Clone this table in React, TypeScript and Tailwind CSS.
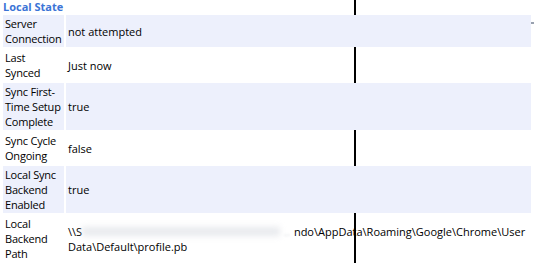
const rows: { label: string[]; value: React.ReactNode; shaded: boolean }[] = [
  { label: ["Server", "Connection"], value: "not attempted", shaded: true },
  { label: ["Last", "Synced"], value: "Just now", shaded: false },
  { label: ["Sync First-", "Time Setup", "Complete"], value: "true", shaded: true },
  { label: ["Sync Cycle", "Ongoing"], value: "false", shaded: false },
  { label: ["Local Sync", "Backend", "Enabled"], value: "true", shaded: true },
  {
    label: ["Local", "Backend", "Path"],
    value: (
      <>
        <span className="flex items-center whitespace-nowrap">
          \\S
          <span className="inline-block w-[198px] h-[9px] bg-gray-300 blur-[3px] opacity-50" />
          <span className="text-gray-300 blur-[1px] px-[4px]">..</span>
          ndo\AppData\Roaming\Google\Chrome\User
        </span>
        <span className="block">Data\Default\profile.pb</span>
      </>
    ),
    shaded: false,
  },
];

export default function App() {
  return (
    <div className="relative w-[534px] h-[263px] overflow-hidden bg-white text-black font-['Segoe_UI','Open_Sans',sans-serif] text-[11px] leading-[15px]">
      {/* stray divider line behind the table */}
      <div className="absolute left-[354px] top-0 bottom-0 w-[2px] bg-black" />
      <div className="absolute right-0 top-[22px] w-[3px] h-[2px] bg-gray-400" />

      <div className="relative pl-[3px] h-[13px] leading-[13px] font-bold text-[#3b74d6]">
        Local State
      </div>
      <table className="relative ml-px w-[532px] border-separate border-spacing-[2px] table-fixed">
        <colgroup>
          <col className="w-[61px]" />
          <col />
        </colgroup>
        <tbody>
          {rows.map((r) => (
            <tr key={r.label.join(" ")}>
              <td className={`pl-[2px] pr-0 py-px align-middle whitespace-nowrap tracking-[-0.2px] ${r.shaded ? "bg-[#edf0fc]" : ""}`}>
                {r.label.map((l) => (
                  <div key={l}>{l}</div>
                ))}
              </td>
              <td className={`px-[2px] py-px align-middle ${r.shaded ? "bg-[#edf0fc]" : ""}`}>
                {r.value}
              </td>
            </tr>
          ))}
        </tbody>
      </table>
    </div>
  );
}
